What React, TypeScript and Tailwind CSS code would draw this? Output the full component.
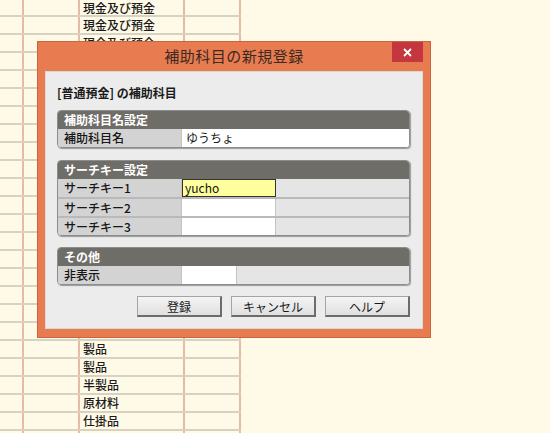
import React from "react";

const font = { fontFamily: '"Noto Sans CJK JP", "Noto Sans", sans-serif' };

// sheet rows behind the dialog (column 3 text only)
const sheetRows: string[] = [
  "現金及び預金",
  "現金及び預金",
  "現金及び預金",
  ...Array(15).fill(""),
  "商品",
  "製品",
  "製品",
  "半製品",
  "原材料",
  "仕掛品",
  "",
];

function Sheet() {
  return (
    <div className="w-[241px]">
      {sheetRows.map((text, i) => (
        <div
          key={i}
          className={
            i === 0
              ? "flex h-[17px] border-b-2 border-[#d8d2c2]"
              : "flex h-[18px] border-b-2 border-[#d8d2c2]"
          }
        >
          <div className="w-[24px] border-r-2 border-[#e8b9a3]" />
          <div className="w-[56px] border-r-2 border-[#e8b9a3]" />
          <div className="w-[105px] border-r-2 border-[#e8b9a3] pl-[3px] text-[12px] leading-[16px] font-medium text-[#1a1a1a]">
            {text}
          </div>
          <div className="w-[56px] border-r-2 border-[#e8b9a3]" />
        </div>
      ))}
    </div>
  );
}

function SectionHeader({ title }: { title: string }) {
  return (
    <div className="h-[18px] bg-[#6f6d68] pl-[6px] text-[12px] leading-[18px] font-bold text-white">
      {title}
    </div>
  );
}

function Row({
  label,
  children,
  first,
}: {
  label: string;
  children: React.ReactNode;
  first?: boolean;
}) {
  return (
    <div
      className={
        first
          ? "flex h-[18px]"
          : "flex h-[19px] border-t-2 border-[#b9b9b9]"
      }
    >
      <div className="w-[124px] shrink-0 bg-[#d3d3d3] pl-[6px] text-[12px] leading-[17px] font-medium text-[#161616] border-r border-[#c4c4c4]">
        {label}
      </div>
      {children}
    </div>
  );
}

function Section({ title, children }: { title: string; children: React.ReactNode }) {
  return (
    <div className="rounded-[4px] overflow-hidden border border-[#8c8c8c] shadow-[1px_1px_1px_rgba(0,0,0,0.35)]">
      <SectionHeader title={title} />
      {children}
    </div>
  );
}

function Button({ label }: { label: string }) {
  return (
    <button className="w-[85px] h-[21px] bg-gradient-to-b from-[#f4f4f4] to-[#e0e0e0] border border-[#a5a5a5] border-b-2 border-r-2 border-b-[#6c6c6c] border-r-[#6c6c6c] text-[12px] leading-[17px] text-[#1a1a1a]">
      {label}
    </button>
  );
}

function Dialog() {
  return (
    <div className="absolute left-[37px] top-[41px] w-[394px] h-[297px] bg-[#e87b50] border border-[#c9653f] px-[7px] pb-[8px] flex flex-col">
      <div className="relative h-[29px] flex items-center justify-center">
        <span className="text-[15px] text-[#3a2a22] tracking-[0.5px]">補助科目の新規登録</span>
        <div className="absolute right-0 top-0 w-[31px] h-[20px] bg-[#c5373e] flex items-center justify-center">
          <svg width="9" height="9" viewBox="0 0 9 9">
            <path d="M1 1 L8 8 M8 1 L1 8" stroke="white" strokeWidth="1.8" />
          </svg>
        </div>
      </div>
      <div className="flex-1 bg-[#ececec] border border-[#d9d9d9] pl-[11px] pr-[12px] pt-[12px]">
        <div className="h-[18px] text-[12px] leading-[18px] font-bold text-[#1a1a1a] mb-[8px]">
          [普通預金] の補助科目
        </div>

        <Section title="補助科目名設定">
          <Row label="補助科目名" first>
            <div className="flex-1 bg-white pl-[4px] text-[12px] leading-[17px] text-[#1a1a1a]">ゆうちょ</div>
          </Row>
        </Section>

        <div className="h-[12px]" />

        <Section title="サーチキー設定">
          <Row label="サーチキー1" first>
            <div className="w-[94px] bg-[#fffe9c] border border-[#333] pl-[2px] text-[12px] leading-[15px] text-[#111]">
              yucho
            </div>
            <div className="flex-1 bg-[#e5e5e5]" />
          </Row>
          <Row label="サーチキー2">
            <div className="w-[94px] bg-white border-r border-[#c4c4c4]" />
            <div className="flex-1 bg-[#e5e5e5]" />
          </Row>
          <Row label="サーチキー3">
            <div className="w-[94px] bg-white border-r border-[#c4c4c4]" />
            <div className="flex-1 bg-[#e5e5e5]" />
          </Row>
        </Section>

        <div className="h-[11px]" />

        <Section title="その他">
          <Row label="非表示" first>
            <div className="w-[55px] bg-white border-r border-[#c4c4c4]" />
            <div className="flex-1 bg-[#e5e5e5]" />
          </Row>
        </Section>

        <div className="flex justify-end gap-[9px] mt-[11px]">
          <Button label="登録" />
          <Button label="キャンセル" />
          <Button label="ヘルプ" />
        </div>
      </div>
    </div>
  );
}

export default function App() {
  return (
    <div className="relative w-[550px] h-[433px] overflow-hidden bg-[#fffae8]" style={font}>
      <Sheet />
      <Dialog />
    </div>
  );
}
